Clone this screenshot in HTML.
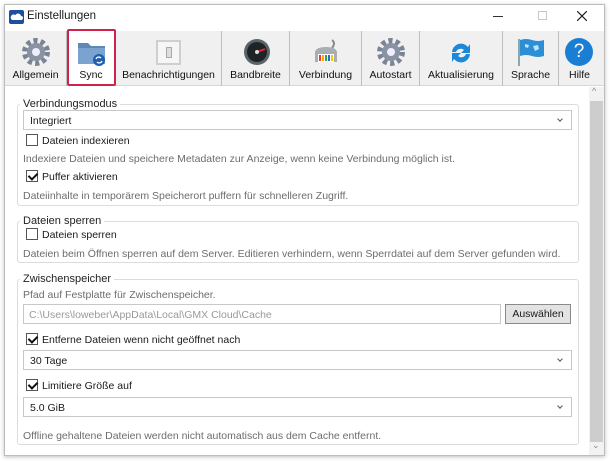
<!DOCTYPE html>
<html><head><meta charset="utf-8"><style>
*{margin:0;padding:0;box-sizing:border-box}
body{width:610px;height:461px;background:#fff;font-family:"Liberation Sans",sans-serif;font-size:10.5px;color:#1a1a1a;position:relative;overflow:hidden}
.a{position:absolute;white-space:nowrap}
.t{margin-top:2px}
.win{position:absolute;left:4px;top:4px;width:601px;height:452px;border:1px solid #bdbdbd;box-shadow:0 1px 4px rgba(0,0,0,.25);background:#fff}
.tb{position:absolute;left:5px;top:31px;width:599px;height:55px;background:#f0f0f0;border-bottom:1px solid #d6d6d6}
.btn{position:absolute;top:31px;height:55px;border-right:1px solid #bfbfbf;text-align:center}
.btn span{position:absolute;left:0;right:0;top:38px;font-size:10.5px;color:#111}
.grp{position:absolute;border:1px solid #dcdcdc;border-radius:3px}
.lbl{position:absolute;background:#fff;padding:0 3px;font-size:11px;color:#222}
.dd{position:absolute;border:1px solid #c8c8c8;background:#fff;height:20px;padding:4px 6px;font-size:10.5px}
.dd:after{content:"";position:absolute;right:9px;top:6px;width:3px;height:3px;border:solid #555;border-width:0 1px 1px 0;transform:rotate(45deg)}
.cb{position:absolute;width:12px;height:12px;border:1px solid #555;background:#fff}
.ck:after{content:"";position:absolute;left:3px;top:0px;width:4px;height:7px;border:solid #111;border-width:0 2px 2px 0;transform:rotate(45deg)}
.g{color:#6d6d6d}
</style></head><body>
<div class="win"></div>
<svg class="a" style="left:9px;top:10px" width="15" height="14"><rect width="15" height="14" rx="2" fill="#1d4f9c"/><path d="M3 10h9a2 2 0 0 0 0-4 3 3 0 0 0-5.5-1A2.3 2.3 0 0 0 3 10z" fill="#fff"/></svg>
<div class="a" style="left:27px;top:10px;font-size:11.5px">Einstellungen</div>
<div class="a" style="left:493px;top:16px;width:10px;height:1px;background:#333"></div>
<div class="a" style="left:538px;top:11px;width:9px;height:9px;border:1px solid #c8c8c8"></div>
<svg class="a" style="left:577px;top:11px" width="10" height="10"><path d="M0 0L10 10M10 0L0 10" stroke="#222" stroke-width="1.2"/></svg>
<div class="tb"></div>
<div class="btn" style="left:5px;width:62px"><svg class="a" style="left:16px;top:6px" width="30" height="30" viewBox="0 0 30 30"><circle cx="15" cy="15" r="11" fill="none" stroke="#7b8494" stroke-width="6" stroke-dasharray="4 3"/><circle cx="15" cy="15" r="9" fill="#8a93a3"/><circle cx="15" cy="15" r="4" fill="#eef"/></svg><span>Allgemein</span></div>
<div class="btn" style="left:67px;width:49px;background:#fff"><svg class="a" style="left:10px;top:8px" width="30" height="28"><path d="M1 4h10l3 3h14v18H1z" fill="#5f88b6"/><rect x="1" y="9" width="27" height="16" fill="#7aa3cf"/><circle cx="22" cy="21" r="6" fill="#1f5fb0"/><path d="M19 20a3 3 0 0 1 5-1M25 22a3 3 0 0 1-5 1" stroke="#fff" stroke-width="1.3" fill="none"/></svg><span>Sync</span></div>
<div class="a" style="left:67px;top:29px;width:49px;height:57px;border:2px solid #d1234a;border-radius:2px"></div>
<div class="btn" style="left:116px;width:106px"><div class="a" style="left:40px;top:9px;width:25px;height:25px;border:2px solid #cfcfcf;background:#f6f6f6"></div><div class="a" style="left:50px;top:16px;width:6px;height:11px;border:1px solid #aaa;background:#ddd"></div><span>Benachrichtigungen</span></div>
<div class="btn" style="left:222px;width:68px"><svg class="a" style="left:21px;top:7px" width="28" height="28"><circle cx="14" cy="14" r="13" fill="#59636a"/><circle cx="14" cy="14" r="10" fill="#1e2326"/><path d="M14 14l8-3" stroke="#e23" stroke-width="2"/><circle cx="14" cy="14" r="2" fill="#ddd"/></svg><span>Bandbreite</span></div>
<div class="btn" style="left:290px;width:72px"><svg class="a" style="left:22px;top:8px" width="28" height="28"><path d="M20 1q4 3 0 8" stroke="#888" stroke-width="2" fill="none"/><path d="M3 13q1-5 11-5t11 5v10H3z" fill="#a9aeb3"/><rect x="6" y="15" width="16" height="8" fill="#fff"/><g stroke-width="2"><path d="M8 16v6" stroke="#e33"/><path d="M11 16v6" stroke="#fa0"/><path d="M14 16v6" stroke="#3a3"/><path d="M17 16v6" stroke="#36c"/><path d="M20 16v6" stroke="#ec0"/></g></svg><span>Verbindung</span></div>
<div class="btn" style="left:362px;width:58px"><svg class="a" style="left:14px;top:6px" width="30" height="30" viewBox="0 0 30 30"><circle cx="15" cy="15" r="11" fill="none" stroke="#7b8494" stroke-width="6" stroke-dasharray="4 3"/><circle cx="15" cy="15" r="9" fill="#8a93a3"/><circle cx="15" cy="15" r="4" fill="#eef"/></svg><span>Autostart</span></div>
<div class="btn" style="left:420px;width:83px"><svg class="a" style="left:27px;top:8px" width="28" height="28"><path d="M5 13a9 9 0 0 1 16-5l2-3v9h-9l3-3a5 5 0 0 0-8 2z" fill="#1e88d8"/><path d="M23 15a9 9 0 0 1-16 5l-2 3v-9h9l-3 3a5 5 0 0 0 8-2z" fill="#1e88d8"/></svg><span>Aktualisierung</span></div>
<div class="btn" style="left:503px;width:56px"><svg class="a" style="left:13px;top:6px" width="30" height="30"><path d="M3 2v27" stroke="#8aa" stroke-width="2"/><path d="M4 3q6-2 12 0t12 0v16q-6 2-12 0t-12 0z" fill="#2c8fd6"/><path d="M9 7l4 1-1 3-3-1zM17 9l5-1 1 4-4 2z" fill="#bfe3ff"/></svg><span>Sprache</span></div>
<div class="btn" style="left:559px;width:41px;border-right:none"><div class="a" style="left:6px;top:7px;width:28px;height:28px;border-radius:50%;background:#1a7fd4;color:#fff;font-size:19px;line-height:28px">?</div><span>Hilfe</span></div>
<!-- scrollbar -->
<div class="a" style="left:589px;top:87px;width:15px;height:368px;background:#f2f2f2"></div>
<div class="a" style="left:590px;top:101px;width:13px;height:341px;background:#cdcdcd"></div>
<div class="a" style="left:592px;top:86px;font-size:9px;color:#888">^</div>
<div class="a" style="left:592px;top:440px;font-size:9px;color:#888">⌄</div>
<!-- group1 -->
<div class="grp" style="left:17px;top:104px;width:562px;height:102px"></div>
<div class="lbl t" style="left:20px;top:96px">Verbindungsmodus</div>
<div class="dd" style="left:23px;top:110px;width:549px">Integriert</div>
<div class="cb" style="left:26px;top:134px"></div><div class="a t" style="left:42px;top:133px">Dateien indexieren</div>
<div class="a g t" style="left:23px;top:151px">Indexiere Dateien und speichere Metadaten zur Anzeige, wenn keine Verbindung möglich ist.</div>
<div class="cb ck" style="left:26px;top:170px"></div><div class="a t" style="left:42px;top:169px">Puffer aktivieren</div>
<div class="a g t" style="left:23px;top:188px">Dateiinhalte in temporärem Speicherort puffern für schnelleren Zugriff.</div>
<!-- group2 -->
<div class="grp" style="left:17px;top:221px;width:562px;height:42px"></div>
<div class="lbl t" style="left:20px;top:213px">Dateien sperren</div>
<div class="cb" style="left:26px;top:228px"></div><div class="a t" style="left:42px;top:227px">Dateien sperren</div>
<div class="a g t" style="left:23px;top:246px">Dateien beim Öffnen sperren auf dem Server. Editieren verhindern, wenn Sperrdatei auf dem Server gefunden wird.</div>
<!-- group3 -->
<div class="grp" style="left:17px;top:279px;width:562px;height:166px"></div>
<div class="lbl t" style="left:20px;top:271px">Zwischenspeicher</div>
<div class="a g t" style="left:23px;top:287px">Pfad auf Festplatte für Zwischenspeicher.</div>
<div class="a" style="left:23px;top:304px;width:478px;height:20px;border:1px solid #c8c8c8;padding:4px 5px;color:#9a9a9a">C:\Users\loweber\AppData\Local\GMX Cloud\Cache</div>
<div class="a" style="left:505px;top:304px;width:66px;height:20px;border:1px solid #8a8a8a;background:#e3e3e3;text-align:center;line-height:19px">Auswählen</div>
<div class="cb ck" style="left:26px;top:333px"></div><div class="a t" style="left:42px;top:332px">Entferne Dateien wenn nicht geöffnet nach</div>
<div class="dd" style="left:23px;top:350px;width:549px">30 Tage</div>
<div class="cb ck" style="left:26px;top:379px"></div><div class="a t" style="left:42px;top:378px">Limitiere Größe auf</div>
<div class="dd" style="left:23px;top:397px;width:549px">5.0 GiB</div>
<div class="a g t" style="left:23px;top:428px">Offline gehaltene Dateien werden nicht automatisch aus dem Cache entfernt.</div>
</body></html>
